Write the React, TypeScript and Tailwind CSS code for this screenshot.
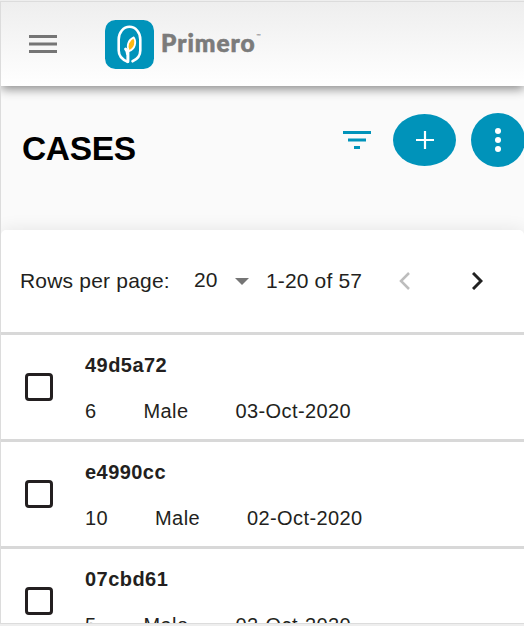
type CaseRow = { id: string; age: string; sex: string; date: string };

const cases: CaseRow[] = [
  { id: "49d5a72", age: "6", sex: "Male", date: "03-Oct-2020" },
  { id: "e4990cc", age: "10", sex: "Male", date: "02-Oct-2020" },
  { id: "07cbd61", age: "5", sex: "Male", date: "02-Oct-2020" },
];

function Logo() {
  return (
    <div className="ml-[48px] flex items-center">
      <svg className="h-[49px] w-[49px]" viewBox="0 0 49 49" fill="none">
        <rect width="49" height="49" rx="10.5" fill="#0093ba" />
        <path
          d="M22.6 41.8C17 39.5 13.7 36 13.7 30.5V19.5C13.7 12.5 18.5 6.8 24.5 6.8S35.3 12.5 35.3 19.5v11c0 5-2.8 8.6-7.8 10.8"
          stroke="#fff"
          strokeWidth="2.6"
          strokeLinecap="round"
        />
        <path d="M22.9 41.6V30.5M22.6 34.5c-.2-2.4-.6-4-2-5.5" stroke="#fff" strokeWidth="3" strokeLinecap="round" />
        <path d="M28.8 17.4c3 4.6 1.4 11.4-4.8 13.8-2.9-5.2-.8-11.4 4.8-13.8Z" fill="#fdb913" stroke="#fff" strokeWidth="1.7" strokeLinejoin="round" />
      </svg>
      <span className="ml-[7px] mt-[-2px] h-[32px] w-[95px] whitespace-nowrap font-[Lato,sans-serif] text-[24.5px] font-black leading-[32px] tracking-[1px] text-[#7b7b7b] [-webkit-text-stroke:0.6px_#7b7b7b]">
        Primero
      </span>
      <span className="mb-[17px] font-[Lato,sans-serif] text-[6px] leading-[6px] text-[#777]">™</span>
    </div>
  );
}

function Header() {
  return (
    <header className="relative z-10 flex h-[84px] shrink-0 items-center bg-linear-to-b from-[#eeeeee] to-white pl-[28px] shadow-[0_3px_10px_0px_rgba(0,0,0,0.46)]">
      <svg className="h-[18px] w-[28px]" viewBox="0 0 28 18" fill="#757575">
        <path d="M0 0h28v3H0zM0 7.5h28v3H0zM0 15h28v3H0z" />
      </svg>
      <Logo />
    </header>
  );
}

function TitleBar() {
  return (
    <section className="flex h-[144px] shrink-0 items-start bg-[#fafafa] pl-[21px] pt-[27px]">
      <h1 className="mt-[16px] w-[321px] shrink-0 text-[33.5px] font-bold leading-[40px] tracking-[-0.35px] text-black">CASES</h1>
      <svg className="mt-[18px] h-[18px] w-[28px] shrink-0" viewBox="0 0 28 18" fill="#0093ba">
        <path d="M0 0h28v3H0zM5 7.5h18v3H5zM11 15h6v3h-6z" />
      </svg>
      <button className="ml-[22px] mt-px flex h-[52px] w-[63px] shrink-0 items-center justify-center rounded-[50%] bg-[#0093ba]">
        <svg className="h-[18px] w-[18px]" viewBox="0 0 18 18" fill="white">
          <path d="M7.9 0h2.2v7.9H18v2.2h-7.9V18H7.9v-7.9H0V7.9h7.9z" />
        </svg>
      </button>
      <button className="ml-[15px] flex h-[54px] w-[54px] shrink-0 items-center justify-center rounded-full bg-[#0093ba]">
        <svg className="h-[24px] w-[6px]" viewBox="0 0 6 24" fill="white">
          <circle cx="3" cy="3" r="3" />
          <circle cx="3" cy="12" r="3" />
          <circle cx="3" cy="21" r="3" />
        </svg>
      </button>
    </section>
  );
}

function Pagination() {
  return (
    <div className="flex h-[102px] items-center text-[21px] leading-[24px]">
      <span className="ml-[19px] w-[174px] whitespace-nowrap tracking-[0.2px]">Rows per page:</span>
      <span className="mt-[-2px] w-[41px]">20</span>
      <svg className="h-[7px] w-[14px]" viewBox="0 0 14 7" fill="#757575">
        <path d="M0 0h14L7 7z" />
      </svg>
      <span className="ml-[17px] w-[133px] whitespace-nowrap tracking-[0.15px]">1-20 of 57</span>
      <svg className="h-[18px] w-[11px]" viewBox="0 0 11 18" fill="none" stroke="#bdbdbd" strokeWidth="2.5">
        <path d="m10 1-8 8 8 8" />
      </svg>
      <svg className="ml-[62px] h-[18px] w-[11px]" viewBox="0 0 11 18" fill="none" stroke="#212121" strokeWidth="3">
        <path d="m1 1 8 8-8 8" />
      </svg>
    </div>
  );
}

function Row({ item }: { item: CaseRow }) {
  return (
    <div className="flex h-[107px] items-center border-t-3 border-[#d8d8d8]">
      <div className="mb-px ml-[24px] h-[28px] w-[28px] shrink-0 rounded-[4px] border-3 border-[#231f20]" />
      <div className="ml-[32px] h-[104px] pt-[18px] leading-[24px]">
        <div className="text-[20px] font-bold tracking-[0.45px]">{item.id}</div>
        <div className="mt-[22px] flex gap-[47px] text-[20px] tracking-[0.4px]">
          <span>{item.age}</span>
          <span>{item.sex}</span>
          <span>{item.date}</span>
        </div>
      </div>
    </div>
  );
}

export default function App() {
  return (
    <div className="h-[626px] w-[524px] overflow-hidden bg-[#eeeeee] pt-px font-['Liberation_Sans',Arial,sans-serif] text-[#231f20]">
      <main className="flex h-[623px] flex-col overflow-hidden border-y border-l border-[#dcdcdc] bg-[#fafafa]">
        <Header />
        <TitleBar />
        <section className="shrink-0 rounded-t-[5px] bg-white shadow-[0_0_18px_rgba(0,0,0,0.09)]">
          <Pagination />
          {cases.map((item) => (
            <Row key={item.id} item={item} />
          ))}
        </section>
      </main>
    </div>
  );
}
